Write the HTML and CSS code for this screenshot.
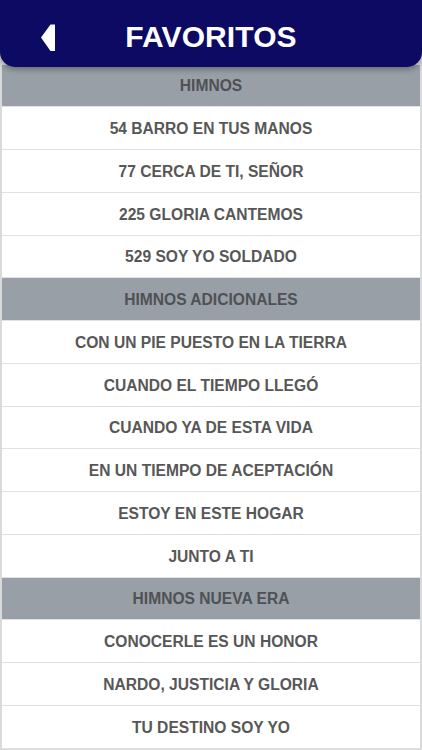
FILE: index.html
```html
<!DOCTYPE html>
<html lang="es">
<head>
<meta charset="utf-8">
<title>Favoritos</title>
<link rel="stylesheet" href="styles.css">
</head>
<body>
<header class="topbar">
  <button class="back" aria-label="Volver">
    <svg width="16" height="28" viewBox="0 0 16 28"><polygon points="0,13.5 9.5,0.5 14,0.5 14,27 9.5,27" fill="#fff"/></svg>
  </button>
  <h1 class="title">FAVORITOS</h1>
</header>
<main class="list">
  <div class="section">HIMNOS</div>
  <div class="row">54 BARRO EN TUS MANOS</div>
  <div class="row">77 CERCA DE TI, SEÑOR</div>
  <div class="row">225 GLORIA CANTEMOS</div>
  <div class="row">529 SOY YO SOLDADO</div>
  <div class="section">HIMNOS ADICIONALES</div>
  <div class="row">CON UN PIE PUESTO EN LA TIERRA</div>
  <div class="row">CUANDO EL TIEMPO LLEGÓ</div>
  <div class="row">CUANDO YA DE ESTA VIDA</div>
  <div class="row">EN UN TIEMPO DE ACEPTACIÓN</div>
  <div class="row">ESTOY EN ESTE HOGAR</div>
  <div class="row">JUNTO A TI</div>
  <div class="section">HIMNOS NUEVA ERA</div>
  <div class="row">CONOCERLE ES UN HONOR</div>
  <div class="row">NARDO, JUSTICIA Y GLORIA</div>
  <div class="row">TU DESTINO SOY YO</div>
</main>
</body>
</html>
```
FILE: styles.css
```css
* { box-sizing: border-box; }
html, body { margin: 0; padding: 0; }
body {
  background: #dadada;
  font-family: "Liberation Sans", Arial, sans-serif;
  width: 422px;
  height: 750px;
  overflow: hidden;
}
.topbar {
  position: relative;
  z-index: 2;
  height: 67px;
  background: #0c0a63;
  border-radius: 0 0 15px 15px;
  box-shadow: 0 2px 6px rgba(0,0,0,0.35);
  display: flex;
  align-items: center;
  justify-content: center;
}
.back {
  position: absolute;
  left: 41px;
  top: 24px;
  padding: 0;
  margin: 0;
  border: 0;
  background: none;
  display: block;
  line-height: 0;
}
.title {
  margin: 0;
  color: #fff;
  font-size: 30px;
  font-weight: bold;
  letter-spacing: 0.1px;
  line-height: 1;
  padding-top: 6px;
}
.list {
  margin: -2.5px 2px 0 2px;
  display: flex;
  flex-direction: column;
}
.section, .row {
  height: 42.75px;
  display: flex;
  align-items: center;
  justify-content: center;
  font-size: 15.6px;
  font-weight: bold;
  color: #555;
  border-bottom: 1px solid #e1e1e1;
  padding-top: 2px;
}
.section {
  background: #989fa7;
  color: #4f5154;
}
.row {
  background: #fff;
  color: #575757;
}
```
